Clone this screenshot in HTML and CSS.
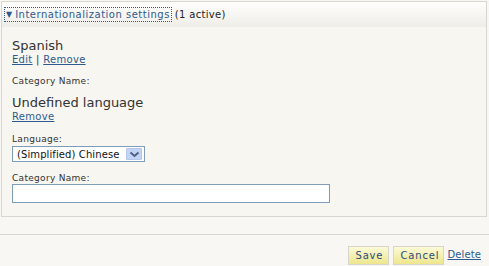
FILE: index.html
```html
<!DOCTYPE html>
<html>
<head>
<meta charset="utf-8">
<link rel="stylesheet" href="styles.css">
</head>
<body>
<div class="fieldset">
  <div class="legend">
    <a class="toggle" href="#"><span class="tri">&#9660;</span>Internationalization settings</a>
    <span class="count">(1 active)</span>
  </div>
  <div class="content">
    <div class="lang">
      <div class="lang-name">Spanish</div>
      <div class="actions"><a href="#">Edit</a> | <a href="#">Remove</a></div>
      <div class="label label-gap">Category Name:</div>
    </div>
    <div class="lang">
      <div class="lang-name">Undefined language</div>
      <div class="actions"><a href="#">Remove</a></div>
      <div class="label label-gap2">Language:</div>
      <div class="select">
        <span class="select-text">(Simplified) Chinese</span>
        <span class="select-btn"><svg width="11" height="7" viewBox="0 0 11 7"><path d="M1.5 1.5 L5.5 5 L9.5 1.5" fill="none" stroke="#4d6185" stroke-width="2"/></svg></span>
      </div>
      <div class="label label-gap3">Category Name:</div>
      <div class="input"></div>
    </div>
  </div>
</div>
<div class="footer">
  <button class="btn btn-save">Save</button>
  <button class="btn btn-cancel">Cancel</button>
  <a href="#" class="delete">Delete</a>
</div>
</body>
</html>
```

FILE: styles.css
```css
html, body {
  margin: 0;
  padding: 0;
  background: #f8f7f3;
  font-family: "DejaVu Sans", Verdana, sans-serif;
  color: #333;
}
body {
  width: 489px;
  height: 266px;
  overflow: hidden;
  padding-top: 1px;
}
a {
  color: #2e5b8f;
}
.fieldset {
  margin: 0 2px 0 1px;
  border: 1px solid #d7d6cf;
  background: #f7f6f1;
  height: 216px;
  box-sizing: border-box;
}
.legend {
  height: 25px;
  background: linear-gradient(#fefefd, #eeede8);
  display: flex;
  align-items: center;
  padding-left: 3px;
  font-size: 10px;
}
.toggle {
  text-decoration: none;
  outline: 1px dotted #2e5b8f;
  outline-offset: 0;
  padding: 1px 1px 1px 1px;
  letter-spacing: 0.5px;
  color: #2e5b8f;
}
.tri {
  font-size: 8px;
  margin-right: 3px;
  vertical-align: 1px;
  letter-spacing: 0;
}
.count {
  margin-left: 4px;
  color: #222;
  letter-spacing: 0.3px;
}
.content {
  padding: 11px 10px 0 10px;
}
.lang-name {
  font-size: 13px;
  line-height: 16px;
  color: #333;
}
.actions {
  font-size: 10px;
  line-height: 11px;
  letter-spacing: 0.3px;
  color: #333;
}
.label {
  font-size: 9px;
  line-height: 11px;
  letter-spacing: 0.3px;
  color: #333;
}
.label-gap { margin-top: 11px; margin-bottom: 8px; }
.label-gap2 { margin-top: 12px; }
.label-gap3 { margin-top: 11px; }
.select {
  display: flex;
  align-items: center;
  justify-content: space-between;
  width: 133px;
  height: 16px;
  margin-top: 1px;
  box-sizing: border-box;
  border: 1px solid #7f9db9;
  background: #fff;
  font-size: 10px;
  padding-left: 4px;
  padding-right: 2px;
  letter-spacing: 0.1px;
  color: #111;
}
.select-btn {
  width: 16px;
  height: 12px;
  background: #c3d3f4;
  border: 1px solid #b5c6ea;
  box-sizing: border-box;
  display: flex;
  align-items: center;
  justify-content: center;
  border-radius: 1px;
}
.input {
  width: 318px;
  height: 19px;
  box-sizing: border-box;
  border: 1px solid #7f9db9;
  background: #fff;
  margin-top: 0;
}
.footer {
  margin-top: 17px;
  border-top: 1px solid #d7d6cf;
  display: flex;
  justify-content: flex-end;
  align-items: flex-start;
  padding: 11px 8px 0 0;
  gap: 4px;
}
.btn {
  font-family: "DejaVu Sans", Verdana, sans-serif;
  font-size: 10px;
  letter-spacing: 0.8px;
  color: #2e4a7a;
  background: linear-gradient(#fcfad8, #ede68e);
  border: 1px solid #d8d6cc;
  height: 19px;
  padding: 0 7px;
  margin: 0;
}
.btn-save { width: 41px; }
.btn-cancel { width: 51px; }
.delete {
  font-size: 10px;
  letter-spacing: 0.1px;
  margin-top: 3px;
}
```
